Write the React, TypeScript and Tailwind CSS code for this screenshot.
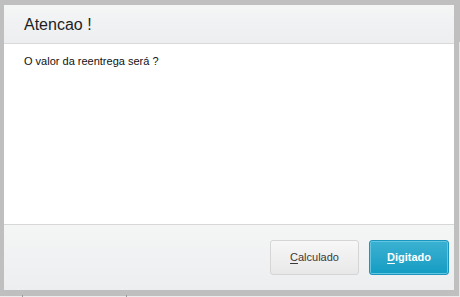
import React from 'react'

const font = { fontFamily: '"Liberation Sans", Arial, sans-serif' }

export default function App() {
  return (
    <div className="relative w-[460px] h-[297px] bg-[#bfbfbf] pt-[5px] pl-[4px] overflow-hidden" style={font}>
      <div className="w-[450px] h-[285px] flex flex-col bg-white">
        <div className="h-[39px] shrink-0 flex items-center pl-[20px] pt-[1px] border-b border-[#d9d9d9] bg-gradient-to-b from-[#f4f5f5] to-[#edeef0]">
          <span className="text-[16px] text-[#1e1e1e]">Atencao !</span>
        </div>
        <div className="flex-1 pl-[20px] pt-[11px]">
          <p className="text-[11px] leading-[13px] text-[#111]">O valor da reentrega será ?</p>
        </div>
        <div className="h-[66px] shrink-0 flex items-center justify-end gap-[10px] pr-[5px] border-t border-[#d6d6d6] bg-gradient-to-b from-[#f4f5f5] to-[#edeef0]">
          <button className="w-[89px] h-[35px] rounded-[3px] border border-[#d5d5d5] bg-gradient-to-b from-[#f7f7f7] to-[#e8e8e8] text-[11px] text-[#3a3a3a]">
            <span className="underline underline-offset-[2px]">C</span>alculado
          </button>
          <button className="w-[80px] h-[35px] rounded-[3px] border border-[#1b95bd] bg-gradient-to-b from-[#3ab1d2] to-[#119cc3] shadow-[inset_0_0_0_1px_#62c6e2] text-[11px] font-bold text-white">
            <span className="underline underline-offset-[2px]">D</span>igitado
          </button>
        </div>
      </div>
      <div className="absolute left-0 bottom-0 w-full h-[1px] bg-[#ececec]">
        <div className="absolute left-[22px] top-[-1px] w-[1px] h-[2px] bg-[#9a9a9a]" />
        <div className="absolute left-[126px] top-[-1px] w-[1px] h-[2px] bg-[#9a9a9a]" />
      </div>
      <div className="absolute right-0 top-[42px] w-[1px] h-[254px] bg-[#e6e6e6]" />
    </div>
  )
}
